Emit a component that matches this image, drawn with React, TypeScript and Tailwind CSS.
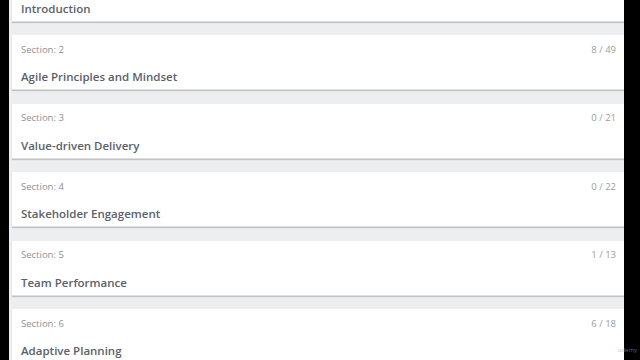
const SECTIONS: { n: number; title: string; count: string }[] = [
  { n: 2, title: 'Agile Principles and Mindset', count: '8 / 49' },
  { n: 3, title: 'Value-driven Delivery', count: '0 / 21' },
  { n: 4, title: 'Stakeholder Engagement', count: '0 / 22' },
  { n: 5, title: 'Team Performance', count: '1 / 13' },
  { n: 6, title: 'Adaptive Planning', count: '6 / 18' },
]

export default function App() {
  return (
    <div
      className="relative flex h-[360px] w-[640px] overflow-hidden bg-black"
      style={{ fontFamily: '"Open Sans", "Noto Sans", sans-serif' }}
    >
      <div className="w-[9px] shrink-0 bg-black" />
      <div className="flex-1 overflow-hidden bg-[#eceef0] pl-[3px]">
        <div className="flex flex-col gap-[13.5px]">
          {/* first section, scrolled mostly out of view */}
          <div className="h-[21.5px] shrink-0 bg-white pl-[9px] border-b border-[#dcdee1] shadow-[0_1px_1px_rgba(0,0,0,0.18)]">
            <div className="text-[11.5px] font-semibold leading-[17px] text-[#5b616a]">Introduction</div>
          </div>
          {SECTIONS.map((s) => (
            <div
              key={s.n}
              className="h-[55px] shrink-0 bg-white pl-[9px] pr-[8px] pt-[7px] shadow-[0_1px_1px_rgba(0,0,0,0.18)] border-b border-[#dcdee1]"
            >
              <div className="flex h-[16px] items-center justify-between text-[9.5px] text-[#8d9196]">
                <span>Section: {s.n}</span>
                <span className="text-[#999da2]">{s.count}</span>
              </div>
              <div className="mt-[10px] text-[11.5px] font-semibold leading-[18px] text-[#5b616a]">
                {s.title}
              </div>
            </div>
          ))}
        </div>
      </div>
      <div className="w-[16px] shrink-0 bg-black" />
      <div className="absolute bottom-[5px] right-[3px] text-[6px] text-[#9aa0a6] opacity-60">
        udemy
      </div>
    </div>
  )
}
